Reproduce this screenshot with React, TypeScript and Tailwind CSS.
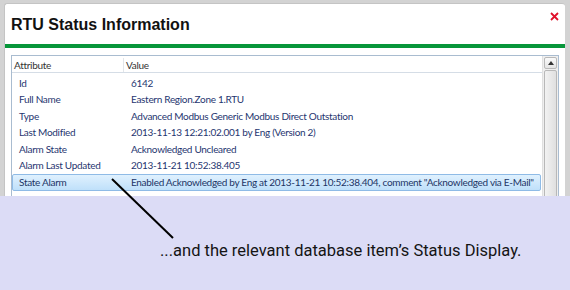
const rows: [string, string][] = [
  ["Id", "6142"],
  ["Full Name", "Eastern Region.Zone 1.RTU"],
  ["Type", "Advanced Modbus Generic Modbus Direct Outstation"],
  ["Last Modified", "2013-11-13 12:21:02.001 by Eng (Version 2)"],
  ["Alarm State", "Acknowledged Uncleared"],
  ["Alarm Last Updated", "2013-11-21 10:52:38.405"],
];

function StatusTable() {
  return (
    <div className="mx-[6px] mt-[7px] h-[150px] border border-[#a9bcd0] flex font-['Lato',sans-serif] text-[10px] tracking-[-0.3px]">
      <div className="flex-1 flex flex-col overflow-hidden">
        <div className="h-[17px] pt-[2px] flex items-center border-b border-[#d5dde6] text-[#333]">
          <div className="w-[112px] pl-[2px] border-r border-[#e2e6ea] h-full flex items-center">Attribute</div>
          <div className="pl-[2px]">Value</div>
        </div>
        <div className="pt-[2px]">
          {rows.map(([label, value]) => (
            <div key={label} className="h-[16.5px] flex items-center text-[#1f3670]">
              <div className="w-[112px] pl-[7px]">{label}</div>
              <div className="pl-[7px] whitespace-nowrap">{value}</div>
            </div>
          ))}
          <div className="h-[16.5px] flex items-center text-[#1c3566] whitespace-nowrap overflow-hidden bg-gradient-to-b from-[#e0f1fe] to-[#bfe0fa] border border-[#8fbbe6] rounded-[2px] mr-[1px]">
            <div className="w-[111px] shrink-0 pl-[6px]">State Alarm</div>
            <div className="pl-[7px]">Enabled Acknowledged by Eng at 2013-11-21 10:52:38.404, comment "Acknowledged via E-Mail"</div>
          </div>
        </div>
      </div>
      <div className="w-[16px] flex flex-col bg-[#efefef] border-l border-[#e0e0e0]">
        <div className="h-[12px] m-[1px] border border-[#b8b8b8] rounded-[2px] bg-gradient-to-b from-[#fafafa] to-[#e4e4e4] flex items-center justify-center">
          <svg width="6" height="4" viewBox="0 0 6 4">
            <path d="M0 4 L3 0 L6 4 Z" fill="#333" />
          </svg>
        </div>
        <div className="flex-1 mx-[1px] mb-[1px] border border-[#b8b8b8] rounded-[2px] bg-gradient-to-r from-[#f2f2f2] to-[#e0e0e0]" />
      </div>
    </div>
  );
}

export default function App() {
  return (
    <div className="relative w-[570px] h-[290px] bg-[#d3d3d3] overflow-hidden pt-[3px] pl-[4px] pr-[5px]">
      <div className="bg-white h-full rounded-tl-[3px] rounded-tr-[3px] border-t border-l border-[#c4c4c4]">
        <div className="h-[40px] flex items-start justify-between pl-[6px] pr-[6px]">
          <h1 className="mt-[13px] font-['Liberation_Sans',Arial,sans-serif] font-bold text-[16px] leading-none text-[#111]">
            RTU Status Information
          </h1>
          <svg className="mt-[8px]" width="9" height="9" viewBox="0 0 9 9">
            <path d="M1 1 L8 8 M8 1 L1 8" stroke="#e0102a" strokeWidth="1.8" />
          </svg>
        </div>
        <div className="h-[4px] bg-[#07963a]" />
        <StatusTable />
      </div>

      <div className="absolute left-0 right-0 top-[196px] bottom-0 bg-[#dcdcf6] flex items-start">
        <p className="mt-[43px] ml-[160px] font-['Roboto',sans-serif] text-[16.5px] text-[#141414] whitespace-nowrap">
          ...and the relevant database item’s Status Display.
        </p>
      </div>

      <svg className="absolute left-0 top-0" width="570" height="290">
        <line x1="112" y1="179" x2="173" y2="238" stroke="#000" strokeWidth="2" />
      </svg>
    </div>
  );
}
